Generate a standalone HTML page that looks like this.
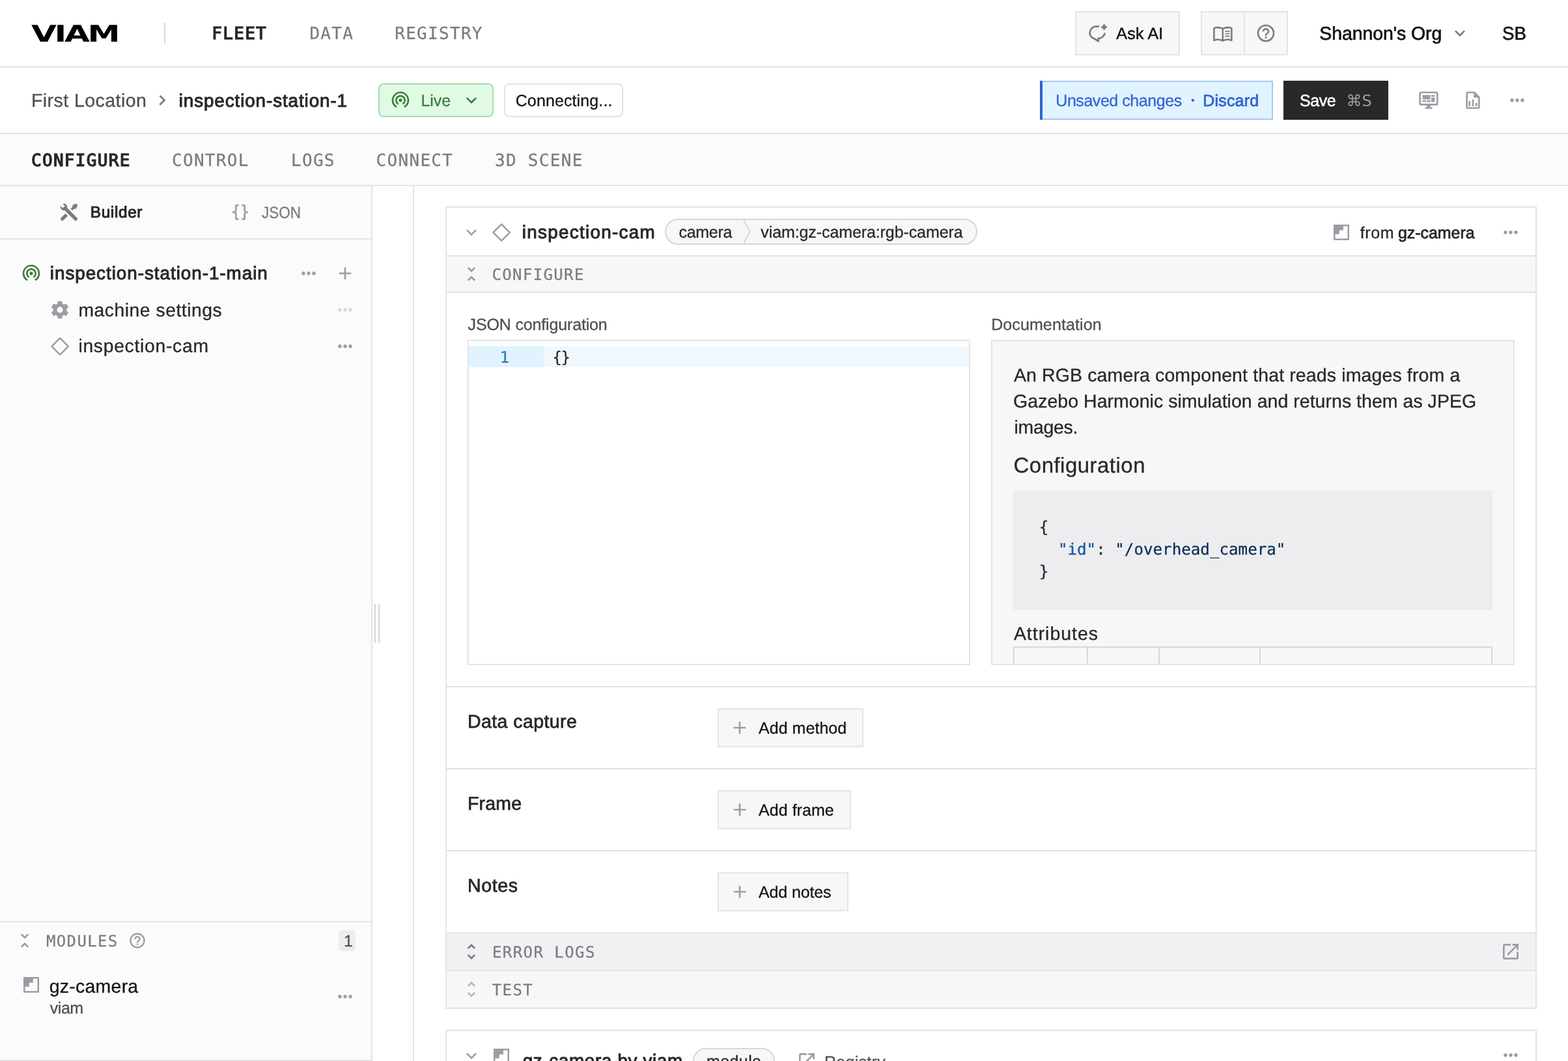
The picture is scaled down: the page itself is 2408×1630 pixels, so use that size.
<!DOCTYPE html>
<html lang="en">
<head>
<meta charset="utf-8">
<title>inspection-station-1 | Viam</title>
<style>
*{box-sizing:border-box}
html,body{margin:0;padding:0;background:#fff}
body{width:2408px;height:1630px;overflow:hidden;position:relative;will-change:transform;text-rendering:geometricPrecision;font-family:'Liberation Sans', Arial, Helvetica, sans-serif;color:#282829}
.b,.i,.t{position:absolute;display:block}
.t{white-space:pre;line-height:1;margin:0;font-weight:400}
@media (max-width:1400px){html{zoom:.5}}

a{text-decoration:none}
h1,h2,h3,h4,p{margin:0}
</style>
</head>
<body>
<header>
<div class="b" style="left:0px;top:102px;width:2408px;height:2px;background:#e4e4e6;"></div>
<div class="t" style="left:48.00px;top:34.90px;font-size:35.4px;font-family:'DejaVu Sans', 'Liberation Sans', sans-serif;font-weight:700;color:#000000;letter-spacing:-2.324px;transform:scaleX(1.4200);transform-origin:0 0;">VIAM</div>
<div class="b" style="left:252px;top:35px;width:2px;height:32px;background:#d7d7db;"></div>
<a class="t" style="left:325.30px;top:39.10px;font-size:26px;font-family:'DejaVu Sans Mono', 'Liberation Mono', monospace;letter-spacing:1.300px;-webkit-text-stroke:1.3px #282829;">FLEET</a>
<a class="t" style="left:475.40px;top:39.10px;font-size:26px;font-family:'DejaVu Sans Mono', 'Liberation Mono', monospace;color:#7a7c80;letter-spacing:1.300px;-webkit-text-stroke:0.25px #7a7c80;">DATA</a>
<a class="t" style="left:606.20px;top:39.10px;font-size:26px;font-family:'DejaVu Sans Mono', 'Liberation Mono', monospace;color:#7a7c80;letter-spacing:1.300px;-webkit-text-stroke:0.25px #7a7c80;">REGISTRY</a>
<div class="b" style="left:1651px;top:17px;width:161px;height:68px;background:#f7f7f8;border:2px solid #e4e4e6;"></div>
<svg class="i" style="left:1660px;top:26px" width="60" height="50" viewBox="0 0 60 50" ><path d="M28 14.6H23.6A9.9 9.9 0 0 0 16.2 31L26.7 37.2V33.2A10.8 10.8 0 0 0 36.9 24.4" fill="none" stroke="#7a7c80" stroke-width="2.7" stroke-linejoin="miter"/><path d="M35.6 10.3Q37.2 14.1 41 15.7Q37.2 17.3 35.6 21.1Q34 17.3 30.2 15.7Q34 14.1 35.6 10.3Z" fill="#7a7c80"/></svg>
<span class="t" style="left:1714.30px;top:39.90px;font-size:25px;color:#131414;letter-spacing:0.220px;-webkit-text-stroke:0.5px #131414;">Ask AI</span>
<div class="b" style="left:1844px;top:17px;width:134px;height:68px;background:#f7f7f8;border:2px solid #e4e4e6;"></div>
<div class="b" style="left:1910px;top:19px;width:2px;height:64px;background:#e4e4e6;"></div>
<svg class="i" style="left:1850px;top:26px" width="60" height="50" viewBox="0 0 60 50" ><g fill="none" stroke="#7a7c80" stroke-width="2.6" stroke-linejoin="round"><path d="M14.4 17.4Q21 14.6 27.8 18.2V36.6Q21 33.2 14.4 36Z"/><path d="M27.8 18.2Q34.6 14.6 41.4 17.4V36Q34.6 33.2 27.8 36.6"/></g><g stroke="#7a7c80" stroke-width="1.7"><path d="M31.3 22.4H38.6M31.3 26H38.6M31.3 29.6H38.6"/></g></svg>
<svg class="i" style="left:1928.0px;top:35.0px" width="32" height="32" viewBox="0 0 24 24" fill="#7a7c80" ><path d="M11,18H13V16H11V18M12,2A10,10 0 0,0 2,12A10,10 0 0,0 12,22A10,10 0 0,0 22,12A10,10 0 0,0 12,2M12,20C7.59,20 4,16.41 4,12C4,7.59 7.59,4 12,4C16.41,4 20,7.59 20,12C20,16.41 16.41,20 12,20M12,6A4,4 0 0,0 8,10H10A2,2 0 0,1 12,8A2,2 0 0,1 14,10C14,12 11,11.75 11,15H13C13,12.75 16,12.5 16,10A4,4 0 0,0 12,6Z"/></svg>
<span class="t" style="left:2026.30px;top:37.60px;font-size:28.5px;color:#131414;letter-spacing:-0.108px;-webkit-text-stroke:0.7px #131414;">Shannon's Org</span>
<svg class="i" style="left:2226px;top:35px" width="32" height="32" viewBox="0 0 24 24" fill="#7a7c80" ><path d="M7.41,8.58L12,13.17L16.59,8.58L18,10L12,16L6,10L7.41,8.58Z"/></svg>
<span class="t" style="left:2306.83px;top:37.60px;font-size:28.5px;color:#131414;-webkit-text-stroke:0.7px #131414;transform:scaleX(0.9722);transform-origin:0 0;">SB</span>
</header>
<section>
<div class="b" style="left:0px;top:204px;width:2408px;height:2px;background:#e4e4e6;"></div>
<a class="t" style="left:47.90px;top:141.40px;font-size:28.5px;color:#4e4f52;letter-spacing:0.454px;-webkit-text-stroke:0.3px #4e4f52;">First Location</a>
<svg class="i" style="left:233px;top:138.3px" width="32" height="32" viewBox="0 0 24 24" fill="#7a7c80" ><path d="M8.59,16.58L13.17,12L8.59,7.41L10,6L16,12L10,18L8.59,16.58Z"/></svg>
<h1 class="t" style="left:274.70px;top:141.00px;font-size:27.8px;letter-spacing:0.911px;-webkit-text-stroke:1.0px #282829;">inspection-station-1</h1>
<div class="b" style="left:581px;top:128px;width:177px;height:52px;background:#e0fae3;border:2px solid #a9dbad;border-radius:8px;"></div>
<svg class="i" style="left:599px;top:138px" width="32" height="32" viewBox="0 0 24 24" fill="#3d7d3f" ><path d="M12 10C10.9 10 10 10.9 10 12S10.9 14 12 14 14 13.1 14 12 13.1 10 12 10M18 12C18 8.7 15.3 6 12 6S6 8.7 6 12C6 14.2 7.2 16.1 9 17.2L10 15.5C8.8 14.8 8 13.5 8 12.1C8 9.9 9.8 8.1 12 8.1S16 9.9 16 12.1C16 13.6 15.2 14.9 14 15.5L15 17.2C16.8 16.2 18 14.2 18 12M12 2C6.5 2 2 6.5 2 12C2 15.7 4 18.9 7 20.6L8 18.9C5.6 17.5 4 14.9 4 12C4 7.6 7.6 4 12 4S20 7.6 20 12C20 15 18.4 17.5 16 18.9L17 20.6C20 18.9 22 15.7 22 12C22 6.5 17.5 2 12 2Z"/></svg>
<span class="t" style="left:646.60px;top:142.90px;font-size:25px;color:#3d7d3f;letter-spacing:-0.133px;-webkit-text-stroke:0.3px #3d7d3f;">Live</span>
<svg class="i" style="left:708px;top:138px" width="32" height="32" viewBox="0 0 24 24" fill="#3d7d3f" ><path d="M7.41,8.58L12,13.17L16.59,8.58L18,10L12,16L6,10L7.41,8.58Z"/></svg>
<div class="b" style="left:774px;top:128px;width:183px;height:52px;background:#fff;border:2px solid #e4e4e6;border-radius:8px;"></div>
<span class="t" style="left:791.70px;top:142.90px;font-size:25px;color:#131414;letter-spacing:0.117px;-webkit-text-stroke:0.3px #131414;">Connecting...</span>
<div class="b" style="left:1597px;top:124px;width:358px;height:60px;background:#e1f3ff;border:2px solid #a5c9f3;"></div>
<div class="b" style="left:1597px;top:124px;width:4px;height:60px;background:#3063d6;"></div>
<span class="t" style="left:1621.30px;top:142.70px;font-size:25px;color:#3165d4;letter-spacing:-0.450px;-webkit-text-stroke:0.3px #3165d4;">Unsaved changes</span>
<span class="t" style="left:1829.20px;top:146.60px;font-size:15px;color:#3165d4;-webkit-text-stroke:0.3px #3165d4;">•</span>
<span class="t" style="left:1847.20px;top:142.70px;font-size:25px;color:#3165d4;letter-spacing:0.200px;-webkit-text-stroke:0.8px #3165d4;">Discard</span>
<div class="b" style="left:1971px;top:124px;width:161px;height:60px;background:#282829;"></div>
<span class="t" style="left:1996.00px;top:142.70px;font-size:25px;color:#ffffff;letter-spacing:-0.433px;-webkit-text-stroke:0.5px #ffffff;">Save</span>
<span class="t" style="left:2067.50px;top:142.70px;font-size:24px;font-family:'DejaVu Sans', 'Liberation Sans', sans-serif;color:#9c9ca4;letter-spacing:-0.100px;">⌘S</span>
<svg class="i" style="left:2178.0px;top:138.0px" width="32" height="32" viewBox="0 0 24 24" fill="#9c9ca4" ><path d="M21,16V4H3V16H21M21,2A2,2 0 0,1 23,4V16A2,2 0 0,1 21,18H14V20H16V22H8V20H10V18H3C1.89,18 1,17.1 1,16V4C1,2.89 1.89,2 3,2H21M5,6H14V11H5V6M15,6H19V8H15V6M19,9V14H15V9H19M5,12H9V14H5V12M10,12H14V14H10V12Z"/></svg>
<svg class="i" style="left:2246.0px;top:138.0px" width="32" height="32" viewBox="0 0 24 24" fill="#9c9ca4" ><path d="M14 2H6C4.89 2 4 2.9 4 4V20C4 21.11 4.89 22 6 22H18C19.11 22 20 21.11 20 20V8L14 2M18 20H6V4H13V9H18V20M9 13V19H7V13H9M15 15V19H17V15H15M11 11V19H13V11H11Z"/></svg>
<svg class="i" style="left:2314.0px;top:138.0px" width="32" height="32" viewBox="0 0 24 24" fill="#9c9ca4" ><path d="M16,12A2,2 0 0,1 18,10A2,2 0 0,1 20,12A2,2 0 0,1 18,14A2,2 0 0,1 16,12M10,12A2,2 0 0,1 12,10A2,2 0 0,1 14,12A2,2 0 0,1 12,14A2,2 0 0,1 10,12M4,12A2,2 0 0,1 6,10A2,2 0 0,1 8,12A2,2 0 0,1 6,14A2,2 0 0,1 4,12Z"/></svg>
</section>
<nav>
<div class="b" style="left:0px;top:206px;width:2408px;height:78px;background:#fbfbfc;"></div>
<div class="b" style="left:0px;top:284px;width:2408px;height:2px;background:#e4e4e6;"></div>
<a class="t" style="left:48.00px;top:233.80px;font-size:26px;font-family:'DejaVu Sans Mono', 'Liberation Mono', monospace;letter-spacing:1.300px;-webkit-text-stroke:1.3px #282829;">CONFIGURE</a>
<a class="t" style="left:264.00px;top:234.10px;font-size:26px;font-family:'DejaVu Sans Mono', 'Liberation Mono', monospace;color:#7a7c80;letter-spacing:1.300px;-webkit-text-stroke:0.25px #7a7c80;">CONTROL</a>
<a class="t" style="left:447.00px;top:234.10px;font-size:26px;font-family:'DejaVu Sans Mono', 'Liberation Mono', monospace;color:#7a7c80;letter-spacing:1.300px;-webkit-text-stroke:0.25px #7a7c80;">LOGS</a>
<a class="t" style="left:577.60px;top:234.10px;font-size:26px;font-family:'DejaVu Sans Mono', 'Liberation Mono', monospace;color:#7a7c80;letter-spacing:1.300px;-webkit-text-stroke:0.25px #7a7c80;">CONNECT</a>
<a class="t" style="left:760.00px;top:234.10px;font-size:26px;font-family:'DejaVu Sans Mono', 'Liberation Mono', monospace;color:#7a7c80;letter-spacing:1.300px;-webkit-text-stroke:0.25px #7a7c80;">3D SCENE</a>
</nav>
<aside>
<div class="b" style="left:0px;top:286px;width:570px;height:1344px;background:#fbfbfc;"></div>
<div class="b" style="left:570px;top:286px;width:2px;height:1344px;background:#e4e4e6;"></div>
<div class="b" style="left:0px;top:366px;width:570px;height:2px;background:#e4e4e6;"></div>
<svg class="i" style="left:90px;top:310px" width="32" height="32" viewBox="0 0 24 24" fill="#7a7c80" ><path d="M21.71 20.29L20.29 21.71A1 1 0 0 1 18.88 21.71L7 9.85A3.81 3.81 0 0 1 6 10A4 4 0 0 1 2.22 4.7L4.76 7.24L5.29 6.71L6.71 5.29L7.24 4.76L4.7 2.22A4 4 0 0 1 10 6A3.81 3.81 0 0 1 9.85 7L21.71 18.88A1 1 0 0 1 21.71 20.29M2.29 18.88A1 1 0 0 0 2.29 20.29L3.71 21.71A1 1 0 0 0 5.12 21.71L10.59 16.25L7.76 13.42M20 2L16 4V6L13.83 8.17L15.83 10.17L18 8H20L22 4Z"/></svg>
<span class="t" style="left:138.80px;top:315.20px;font-size:24.3px;letter-spacing:0.667px;-webkit-text-stroke:1.0px #282829;">Builder</span>
<svg class="i" style="left:353px;top:310px" width="32" height="32" viewBox="0 0 24 24" fill="#9c9ca4" ><path d="M8,3A2,2 0 0,0 6,5V9A2,2 0 0,1 4,11H3V13H4A2,2 0 0,1 6,15V19A2,2 0 0,0 8,21H10V19H8V14A2,2 0 0,0 6,12A2,2 0 0,0 8,10V5H10V3M16,3A2,2 0 0,1 18,5V9A2,2 0 0,0 20,11H21V13H20A2,2 0 0,0 18,15V19A2,2 0 0,1 16,21H14V19H16V14A2,2 0 0,1 18,12A2,2 0 0,1 16,10V5H14V3H16Z"/></svg>
<span class="t" style="left:402.00px;top:314.50px;font-size:25px;color:#7a7c80;-webkit-text-stroke:0.3px #7a7c80;transform:scaleX(0.8985);transform-origin:0 0;">JSON</span>
<svg class="i" style="left:32px;top:404px" width="32" height="32" viewBox="0 0 24 24" fill="#3d7d3f" ><path d="M12 10C10.9 10 10 10.9 10 12S10.9 14 12 14 14 13.1 14 12 13.1 10 12 10M18 12C18 8.7 15.3 6 12 6S6 8.7 6 12C6 14.2 7.2 16.1 9 17.2L10 15.5C8.8 14.8 8 13.5 8 12.1C8 9.9 9.8 8.1 12 8.1S16 9.9 16 12.1C16 13.6 15.2 14.9 14 15.5L15 17.2C16.8 16.2 18 14.2 18 12M12 2C6.5 2 2 6.5 2 12C2 15.7 4 18.9 7 20.6L8 18.9C5.6 17.5 4 14.9 4 12C4 7.6 7.6 4 12 4S20 7.6 20 12C20 15 18.4 17.5 16 18.9L17 20.6C20 18.9 22 15.7 22 12C22 6.5 17.5 2 12 2Z"/></svg>
<span class="t" style="left:76.80px;top:406.30px;font-size:27.8px;letter-spacing:0.975px;-webkit-text-stroke:1.0px #282829;">inspection-station-1-main</span>
<svg class="i" style="left:458.0px;top:404.0px" width="32" height="32" viewBox="0 0 24 24" fill="#9c9ca4" ><path d="M16,12A2,2 0 0,1 18,10A2,2 0 0,1 20,12A2,2 0 0,1 18,14A2,2 0 0,1 16,12M10,12A2,2 0 0,1 12,10A2,2 0 0,1 14,12A2,2 0 0,1 12,14A2,2 0 0,1 10,12M4,12A2,2 0 0,1 6,10A2,2 0 0,1 8,12A2,2 0 0,1 6,14A2,2 0 0,1 4,12Z"/></svg>
<svg class="i" style="left:514.0px;top:404.0px" width="32" height="32" viewBox="0 0 24 24" fill="#9c9ca4" ><path d="M19,13H13V19H11V13H5V11H11V5H13V11H19V13Z"/></svg>
<svg class="i" style="left:76px;top:460px" width="32" height="32" viewBox="0 0 24 24" fill="#9c9ca4" ><path d="M12,15.5A3.5,3.5 0 0,1 8.5,12A3.5,3.5 0 0,1 12,8.5A3.5,3.5 0 0,1 15.5,12A3.5,3.5 0 0,1 12,15.5M19.43,12.97C19.47,12.65 19.5,12.33 19.5,12C19.5,11.67 19.47,11.34 19.43,11L21.54,9.37C21.73,9.22 21.78,8.95 21.66,8.73L19.66,5.27C19.54,5.05 19.27,4.96 19.05,5.05L16.56,6.05C16.04,5.66 15.5,5.32 14.87,5.07L14.5,2.42C14.46,2.18 14.25,2 14,2H10C9.75,2 9.54,2.18 9.5,2.42L9.13,5.07C8.5,5.32 7.96,5.66 7.44,6.05L4.95,5.05C4.73,4.96 4.46,5.05 4.34,5.27L2.34,8.73C2.21,8.95 2.27,9.22 2.46,9.37L4.57,11C4.53,11.34 4.5,11.67 4.5,12C4.5,12.33 4.53,12.65 4.57,12.97L2.46,14.63C2.27,14.78 2.21,15.05 2.34,15.27L4.34,18.73C4.46,18.95 4.73,19.03 4.95,18.95L7.44,17.94C7.96,18.34 8.5,18.68 9.13,18.93L9.5,21.58C9.54,21.82 9.75,22 10,22H14C14.25,22 14.46,21.82 14.5,21.58L14.87,18.93C15.5,18.67 16.04,18.34 16.56,17.94L19.05,18.95C19.27,19.03 19.54,18.95 19.66,18.73L21.66,15.27C21.78,15.05 21.73,14.78 21.54,14.63L19.43,12.97Z"/></svg>
<span class="t" style="left:120.40px;top:461.60px;font-size:28.3px;letter-spacing:0.533px;-webkit-text-stroke:0.3px #282829;">machine settings</span>
<svg class="i" style="left:514.0px;top:460.0px" width="32" height="32" viewBox="0 0 24 24" fill="#d7d7db" ><path d="M16,12A2,2 0 0,1 18,10A2,2 0 0,1 20,12A2,2 0 0,1 18,14A2,2 0 0,1 16,12M10,12A2,2 0 0,1 12,10A2,2 0 0,1 14,12A2,2 0 0,1 12,14A2,2 0 0,1 10,12M4,12A2,2 0 0,1 6,10A2,2 0 0,1 8,12A2,2 0 0,1 6,14A2,2 0 0,1 4,12Z"/></svg>
<svg class="i" style="left:76.75px;top:516.75px" width="30.3" height="30.3" viewBox="0 0 30.3 30.3" ><path d="M15.15 2.4000000000000004L27.9 15.15L15.15 27.9L2.4000000000000004 15.15Z" fill="none" stroke="#9c9ca4" stroke-width="2.4" stroke-linejoin="round"/></svg>
<span class="t" style="left:120.40px;top:517.30px;font-size:28.3px;letter-spacing:0.715px;-webkit-text-stroke:0.3px #282829;">inspection-cam</span>
<svg class="i" style="left:514.0px;top:516.0px" width="32" height="32" viewBox="0 0 24 24" fill="#9c9ca4" ><path d="M16,12A2,2 0 0,1 18,10A2,2 0 0,1 20,12A2,2 0 0,1 18,14A2,2 0 0,1 16,12M10,12A2,2 0 0,1 12,10A2,2 0 0,1 14,12A2,2 0 0,1 12,14A2,2 0 0,1 10,12M4,12A2,2 0 0,1 6,10A2,2 0 0,1 8,12A2,2 0 0,1 6,14A2,2 0 0,1 4,12Z"/></svg>
<div class="b" style="left:0px;top:1415px;width:570px;height:2px;background:#e4e4e6;"></div>
<svg class="i" style="left:22.3px;top:1429.0px" width="32" height="32" viewBox="0 0 24 24" fill="#9c9ca4" ><path d="M16.59,5.41L15.17,4L12,7.17L8.83,4L7.41,5.41L12,10M7.41,18.59L8.83,20L12,16.83L15.17,20L16.58,18.59L12,14L7.41,18.59Z"/></svg>
<span class="t" style="left:71.00px;top:1433.80px;font-size:24px;font-family:'DejaVu Sans Mono', 'Liberation Mono', monospace;color:#7a7c80;letter-spacing:1.350px;-webkit-text-stroke:0.25px #7a7c80;">MODULES</span>
<svg class="i" style="left:197.0px;top:1431.0px" width="28" height="28" viewBox="0 0 24 24" fill="#9c9ca4" ><path d="M11,18H13V16H11V18M12,2A10,10 0 0,0 2,12A10,10 0 0,0 12,22A10,10 0 0,0 22,12A10,10 0 0,0 12,2M12,20C7.59,20 4,16.41 4,12C4,7.59 7.59,4 12,4C16.41,4 20,7.59 20,12C20,16.41 16.41,20 12,20M12,6A4,4 0 0,0 8,10H10A2,2 0 0,1 12,8A2,2 0 0,1 14,10C14,12 11,11.75 11,15H13C13,12.75 16,12.5 16,10A4,4 0 0,0 12,6Z"/></svg>
<div class="b" style="left:520px;top:1429px;width:26px;height:32px;background:#ededf0;border-radius:6px;"></div>
<span class="t" style="left:528.00px;top:1434.00px;font-size:25px;color:#4e4f52;-webkit-text-stroke:0.3px #4e4f52;">1</span>
<svg class="i" style="left:36px;top:1501px" width="24" height="24" viewBox="0 0 24 24"><rect x="1.25" y="1.25" width="21.5" height="21.5" fill="none" stroke="#9c9ca4" stroke-width="2.5"/><path d="M0 0H14.9V8.8H8.8V14.8H0Z" fill="#9c9ca4"/></svg>
<span class="t" style="left:75.80px;top:1501.60px;font-size:28.5px;color:#131414;letter-spacing:0.225px;-webkit-text-stroke:0.3px #131414;">gz-camera</span>
<span class="t" style="left:76.80px;top:1537.00px;font-size:25px;color:#4e4f52;letter-spacing:-0.467px;-webkit-text-stroke:0.3px #4e4f52;">viam</span>
<svg class="i" style="left:514.0px;top:1514.6px" width="32" height="32" viewBox="0 0 24 24" fill="#9c9ca4" ><path d="M16,12A2,2 0 0,1 18,10A2,2 0 0,1 20,12A2,2 0 0,1 18,14A2,2 0 0,1 16,12M10,12A2,2 0 0,1 12,10A2,2 0 0,1 14,12A2,2 0 0,1 12,14A2,2 0 0,1 10,12M4,12A2,2 0 0,1 6,10A2,2 0 0,1 8,12A2,2 0 0,1 6,14A2,2 0 0,1 4,12Z"/></svg>
<div class="b" style="left:0px;top:1628px;width:570px;height:2px;background:#e4e4e6;"></div>
</aside>
<div class="b" style="left:634px;top:286px;width:2px;height:1344px;background:#e4e4e6;"></div>
<div class="b" style="left:575px;top:928px;width:2px;height:60px;background:#d5d5d6;"></div>
<div class="b" style="left:581px;top:928px;width:2px;height:60px;background:#d5d5d6;"></div>
<main>
<div class="b" style="left:684px;top:317px;width:1676px;height:1233px;background:#fff;border:2px solid #e4e4e6;"></div>
<div class="b" style="left:686px;top:392px;width:1672px;height:2px;background:#e4e4e6;"></div>
<div class="b" style="left:686px;top:394px;width:1672px;height:54px;background:#f7f7f8;"></div>
<div class="b" style="left:686px;top:448px;width:1672px;height:2px;background:#e4e4e6;"></div>
<svg class="i" style="left:707.8px;top:340.5px" width="32" height="32" viewBox="0 0 24 24" fill="#9c9ca4" ><path d="M7.41,8.58L12,13.17L16.59,8.58L18,10L12,16L6,10L7.41,8.58Z"/></svg>
<svg class="i" style="left:755.05px;top:341.55px" width="30.3" height="30.3" viewBox="0 0 30.3 30.3" ><path d="M15.15 2.4000000000000004L27.9 15.15L15.15 27.9L2.4000000000000004 15.15Z" fill="none" stroke="#9c9ca4" stroke-width="2.4" stroke-linejoin="round"/></svg>
<h2 class="t" style="left:801.80px;top:342.50px;font-size:27.8px;letter-spacing:1.308px;-webkit-text-stroke:1.0px #282829;">inspection-cam</h2>
<div class="b" style="left:1021px;top:336px;width:480px;height:40px;background:#f7f7f8;border:2px solid #d6d6d9;border-radius:20px;"></div>
<span class="t" style="left:1042.60px;top:344.70px;font-size:25px;letter-spacing:-0.320px;-webkit-text-stroke:0.3px #282829;">camera</span>
<svg class="i" style="left:1140.5px;top:338px" width="12" height="36" viewBox="0 0 12 36" ><path d="M1 0L10.5 18L1 36" fill="none" stroke="#d7d7db" stroke-width="2"/></svg>
<span class="t" style="left:1168.30px;top:344.70px;font-size:25px;letter-spacing:-0.096px;-webkit-text-stroke:0.3px #282829;">viam:gz-camera:rgb-camera</span>
<svg class="i" style="left:2048px;top:345px" width="24" height="24" viewBox="0 0 24 24"><rect x="1.25" y="1.25" width="21.5" height="21.5" fill="none" stroke="#9c9ca4" stroke-width="2.5"/><path d="M0 0H14.9V8.8H8.8V14.8H0Z" fill="#9c9ca4"/></svg>
<span class="t" style="left:2088.80px;top:346.00px;font-size:25px;letter-spacing:0.567px;-webkit-text-stroke:0.3px #282829;">from</span>
<span class="t" style="left:2147.00px;top:346.00px;font-size:25px;letter-spacing:-0.062px;-webkit-text-stroke:0.75px #282829;">gz-camera</span>
<svg class="i" style="left:2304.0px;top:341.0px" width="32" height="32" viewBox="0 0 24 24" fill="#9c9ca4" ><path d="M16,12A2,2 0 0,1 18,10A2,2 0 0,1 20,12A2,2 0 0,1 18,14A2,2 0 0,1 16,12M10,12A2,2 0 0,1 12,10A2,2 0 0,1 14,12A2,2 0 0,1 12,14A2,2 0 0,1 10,12M4,12A2,2 0 0,1 6,10A2,2 0 0,1 8,12A2,2 0 0,1 6,14A2,2 0 0,1 4,12Z"/></svg>
<svg class="i" style="left:707.8px;top:405.0px" width="32" height="32" viewBox="0 0 24 24" fill="#9c9ca4" ><path d="M16.59,5.41L15.17,4L12,7.17L8.83,4L7.41,5.41L12,10M7.41,18.59L8.83,20L12,16.83L15.17,20L16.58,18.59L12,14L7.41,18.59Z"/></svg>
<span class="t" style="left:755.50px;top:409.70px;font-size:24px;font-family:'DejaVu Sans Mono', 'Liberation Mono', monospace;color:#7a7c80;letter-spacing:1.350px;-webkit-text-stroke:0.25px #7a7c80;">CONFIGURE</span>
<span class="t" style="left:718.60px;top:487.20px;font-size:25px;color:#4e4f52;letter-spacing:-0.153px;-webkit-text-stroke:0.3px #4e4f52;">JSON configuration</span>
<div class="b" style="left:718px;top:522px;width:772px;height:500px;background:#fff;border:2px solid #e4e4e6;"></div>
<div class="b" style="left:720px;top:532px;width:115px;height:32px;background:#e1f3ff;"></div>
<div class="b" style="left:835px;top:532px;width:653px;height:32px;background:#f0f8fe;"></div>
<span class="t" style="left:767.70px;top:537.40px;font-size:24px;font-family:'DejaVu Sans Mono', 'Liberation Mono', monospace;color:#2d7ea0;-webkit-text-stroke:0.25px #2d7ea0;">1</span>
<span class="t" style="left:848.60px;top:537.40px;font-size:24px;font-family:'DejaVu Sans Mono', 'Liberation Mono', monospace;letter-spacing:-1.500px;-webkit-text-stroke:0.25px #282829;">{}</span>
<span class="t" style="left:1522.20px;top:487.20px;font-size:25px;color:#4e4f52;letter-spacing:0.100px;-webkit-text-stroke:0.3px #4e4f52;">Documentation</span>
<div class="b" style="left:1522px;top:522px;width:804px;height:500px;background:#f7f7f8;border:2px solid #e4e4e6;"></div>
<p class="t" style="left:1556.90px;top:562.80px;font-size:28.5px;letter-spacing:0.123px;-webkit-text-stroke:0.3px #282829;">An RGB camera component that reads images from a</p>
<p class="t" style="left:1556.10px;top:602.60px;font-size:28.5px;letter-spacing:0.028px;-webkit-text-stroke:0.3px #282829;">Gazebo Harmonic simulation and returns them as JPEG</p>
<p class="t" style="left:1557.50px;top:642.80px;font-size:28.5px;letter-spacing:-0.333px;-webkit-text-stroke:0.3px #282829;">images.</p>
<h3 class="t" style="left:1556.50px;top:697.70px;font-size:33px;letter-spacing:0.475px;-webkit-text-stroke:0.3px #282829;">Configuration</h3>
<div class="b" style="left:1556px;top:754px;width:736px;height:183px;background:#ededf0;"></div>
<code class="t" style="left:1595.70px;top:798.20px;font-size:24.4px;font-family:'DejaVu Sans Mono', 'Liberation Mono', monospace;color:#24292e;-webkit-text-stroke:0.25px #24292e;">{</code>
<code class="t" style="left:1624.90px;top:832.30px;font-size:24.2px;font-family:'DejaVu Sans Mono', 'Liberation Mono', monospace;color:#24292e;-webkit-text-stroke:0.25px #24292e;"><span style="color:#005cc5">"id"</span>: <span style="color:#032f62">"/overhead_camera"</span></code>
<code class="t" style="left:1595.70px;top:865.70px;font-size:24.4px;font-family:'DejaVu Sans Mono', 'Liberation Mono', monospace;color:#24292e;-webkit-text-stroke:0.25px #24292e;">}</code>
<h4 class="t" style="left:1556.90px;top:960.20px;font-size:28.5px;letter-spacing:0.967px;-webkit-text-stroke:0.3px #282829;">Attributes</h4>
<div class="b" style="left:1556px;top:993px;width:736px;height:27px;border:2px solid #d7d7db;border-bottom:0;"></div>
<div class="b" style="left:1669px;top:995px;width:2px;height:25px;background:#d7d7db;"></div>
<div class="b" style="left:1779px;top:995px;width:2px;height:25px;background:#d7d7db;"></div>
<div class="b" style="left:1934px;top:995px;width:2px;height:25px;background:#d7d7db;"></div>
<div class="b" style="left:686px;top:1054px;width:1672px;height:2px;background:#e4e4e6;"></div>
<h3 class="t" style="left:718.00px;top:1095.00px;font-size:28.5px;letter-spacing:0.418px;-webkit-text-stroke:0.75px #282829;">Data capture</h3>
<div class="b" style="left:1102px;top:1088px;width:224px;height:60px;background:#f7f7f8;border:2px solid #e4e4e6;"></div>
<svg class="i" style="left:1119.6px;top:1102.2px" width="32" height="32" viewBox="0 0 24 24" fill="#9c9ca4" ><path d="M19,13H13V19H11V13H5V11H11V5H13V11H19V13Z"/></svg>
<span class="t" style="left:1165.00px;top:1106.80px;font-size:25px;color:#131414;letter-spacing:0.044px;-webkit-text-stroke:0.3px #131414;">Add method</span>
<div class="b" style="left:686px;top:1180px;width:1672px;height:2px;background:#e4e4e6;"></div>
<h3 class="t" style="left:718.00px;top:1221.00px;font-size:28.5px;letter-spacing:0.175px;-webkit-text-stroke:0.75px #282829;">Frame</h3>
<div class="b" style="left:1102px;top:1214px;width:205px;height:60px;background:#f7f7f8;border:2px solid #e4e4e6;"></div>
<svg class="i" style="left:1119.6px;top:1228.2px" width="32" height="32" viewBox="0 0 24 24" fill="#9c9ca4" ><path d="M19,13H13V19H11V13H5V11H11V5H13V11H19V13Z"/></svg>
<span class="t" style="left:1165.00px;top:1232.80px;font-size:25px;color:#131414;letter-spacing:0.050px;-webkit-text-stroke:0.3px #131414;">Add frame</span>
<div class="b" style="left:686px;top:1306px;width:1672px;height:2px;background:#e4e4e6;"></div>
<h3 class="t" style="left:718.00px;top:1346.70px;font-size:28.5px;letter-spacing:0.650px;-webkit-text-stroke:0.75px #282829;">Notes</h3>
<div class="b" style="left:1102px;top:1340px;width:201px;height:60px;background:#f7f7f8;border:2px solid #e4e4e6;"></div>
<svg class="i" style="left:1119.6px;top:1354.2px" width="32" height="32" viewBox="0 0 24 24" fill="#9c9ca4" ><path d="M19,13H13V19H11V13H5V11H11V5H13V11H19V13Z"/></svg>
<span class="t" style="left:1165.00px;top:1358.80px;font-size:25px;color:#131414;letter-spacing:-0.125px;-webkit-text-stroke:0.3px #131414;">Add notes</span>
<div class="b" style="left:686px;top:1432px;width:1672px;height:2px;background:#e4e4e6;"></div>
<div class="b" style="left:686px;top:1434px;width:1672px;height:56px;background:#f1f1f4;"></div>
<svg class="i" style="left:707.8px;top:1446.0px" width="32" height="32" viewBox="0 0 24 24" fill="#7a7c80" ><path d="M12,18.17L8.83,15L7.41,16.41L12,21L16.59,16.41L15.17,15M12,5.83L15.17,9L16.58,7.59L12,3L7.41,7.59L8.83,9L12,5.83Z"/></svg>
<span class="t" style="left:755.90px;top:1451.20px;font-size:24px;font-family:'DejaVu Sans Mono', 'Liberation Mono', monospace;color:#7a7c80;letter-spacing:1.450px;-webkit-text-stroke:0.25px #7a7c80;">ERROR LOGS</span>
<svg class="i" style="left:2304.0px;top:1446.0px" width="32" height="32" viewBox="0 0 24 24" fill="#9c9ca4" ><path d="M14,3V5H17.59L7.76,14.83L9.17,16.24L19,6.41V10H21V3M19,19H5V5H12V3H5C3.89,3 3,3.9 3,5V19A2,2 0 0,0 5,21H19A2,2 0 0,0 21,19V12H19V19Z"/></svg>
<div class="b" style="left:686px;top:1490px;width:1672px;height:2px;background:#e4e4e6;"></div>
<div class="b" style="left:686px;top:1492px;width:1672px;height:56px;background:#f7f7f8;"></div>
<svg class="i" style="left:707.8px;top:1504.0px" width="32" height="32" viewBox="0 0 24 24" fill="#b6b6be" ><path d="M12,18.17L8.83,15L7.41,16.41L12,21L16.59,16.41L15.17,15M12,5.83L15.17,9L16.58,7.59L12,3L7.41,7.59L8.83,9L12,5.83Z"/></svg>
<span class="t" style="left:755.80px;top:1509.00px;font-size:24px;font-family:'DejaVu Sans Mono', 'Liberation Mono', monospace;color:#7a7c80;letter-spacing:1.350px;-webkit-text-stroke:0.25px #7a7c80;">TEST</span>
<div class="b" style="left:684px;top:1582px;width:1676px;height:100px;background:#fff;border:2px solid #e4e4e6;"></div>
<svg class="i" style="left:707.8px;top:1606.0px" width="32" height="32" viewBox="0 0 24 24" fill="#9c9ca4" ><path d="M7.41,8.58L12,13.17L16.59,8.58L18,10L12,16L6,10L7.41,8.58Z"/></svg>
<svg class="i" style="left:758px;top:1610.5px" width="24" height="24" viewBox="0 0 24 24"><rect x="1.25" y="1.25" width="21.5" height="21.5" fill="none" stroke="#9c9ca4" stroke-width="2.5"/><path d="M0 0H14.9V8.8H8.8V14.8H0Z" fill="#9c9ca4"/></svg>
<h2 class="t" style="left:802.70px;top:1615.70px;font-size:27.8px;letter-spacing:0.669px;-webkit-text-stroke:1.0px #282829;">gz-camera by viam</h2>
<div class="b" style="left:1064px;top:1610px;width:126px;height:39px;background:#f7f7f8;border:2px solid #d6d6d9;border-radius:20px;"></div>
<span class="t" style="left:1085.00px;top:1619.00px;font-size:25px;letter-spacing:0.400px;-webkit-text-stroke:0.3px #282829;">module</span>
<svg class="i" style="left:1223px;top:1614px" width="32" height="32" viewBox="0 0 24 24" fill="#9c9ca4" ><path d="M14,3V5H17.59L7.76,14.83L9.17,16.24L19,6.41V10H21V3M19,19H5V5H12V3H5C3.89,3 3,3.9 3,5V19A2,2 0 0,0 5,21H19A2,2 0 0,0 21,19V12H19V19Z"/></svg>
<a class="t" style="left:1266.00px;top:1620.20px;font-size:25px;color:#4e4f52;letter-spacing:0.286px;-webkit-text-stroke:0.3px #4e4f52;">Registry</a>
<svg class="i" style="left:2304.0px;top:1605.0px" width="32" height="32" viewBox="0 0 24 24" fill="#9c9ca4" ><path d="M16,12A2,2 0 0,1 18,10A2,2 0 0,1 20,12A2,2 0 0,1 18,14A2,2 0 0,1 16,12M10,12A2,2 0 0,1 12,10A2,2 0 0,1 14,12A2,2 0 0,1 12,14A2,2 0 0,1 10,12M4,12A2,2 0 0,1 6,10A2,2 0 0,1 8,12A2,2 0 0,1 6,14A2,2 0 0,1 4,12Z"/></svg>
</main>
</body>
</html>
